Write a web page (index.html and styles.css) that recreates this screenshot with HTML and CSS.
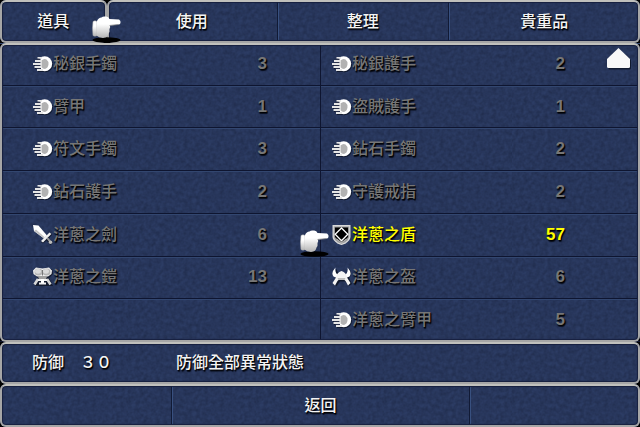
FILE: index.html
```html
<!DOCTYPE html>
<html lang="zh-Hant">
<head>
  <meta charset="UTF-8">
  <meta name="viewport" content="width=device-width, initial-scale=1">
  <title>道具</title>
  <link rel="stylesheet" href="styles.css">
</head>
<body>
  <svg class="sprites" aria-hidden="true">
    <defs>
      <linearGradient id="hand-shade" x1="0" y1="0" x2="0" y2="1">
        <stop offset="0.35" stop-color="#ffffff"/>
        <stop offset="1" stop-color="#b4b4b4"/>
      </linearGradient>
    </defs>
    <symbol id="cursor" viewBox="0 0 30 28">
      <ellipse cx="15.5" cy="25" rx="14" ry="2.8" fill="#000"/>
      <path d="M2 6.500 Q4 5 6 6.500 V20.500 Q4 22 2 20.500 Q1 13 2 6.500Z" fill="url(#hand-shade)" stroke="#aaa" stroke-width=".5"/>
      <path d="M6 6 Q7.500 2.500 10.500 2.500 Q12 1 14.500 1.500 Q17.500 1 18.500 4 L28 4.500 Q30 5.500 29.500 8 Q29 9.500 27.500 9.500 L19 10.500 Q19.500 12.500 18.500 14 Q19 17 17.500 18.500 Q17 22.500 12 23 Q7.500 22.500 5.500 20.500Z" fill="url(#hand-shade)"/>
      <path d="M18.500 10.500 L27.500 9.500" stroke="#888" stroke-width=".8" fill="none"/>
    </symbol>
    <symbol id="glove" viewBox="0 0 20 20">
      <circle cx="12.500" cy="10.800" r="7.500" fill="#111a30"/>
      <path d="M2 8 H9 M1 11 H9 M2 14 H9 M5 17 H11" stroke="#111a30" stroke-width="2" fill="none"/>
      <circle cx="11.700" cy="9.800" r="7.500" fill="#fff"/>
      <path d="M8.500 6.500 Q11 4 13.500 5.500 Q16 7.500 15.500 10.500 Q15 14 12 15 Q9.500 15 8.500 13Z" fill="#b2b2b2"/>
      <path d="M4.500 3.800 H9 M2 7 H8.500 M0 10 H8.500 M1.500 13 H8.500 M4 16 H10" stroke="#e6e6e6" stroke-width="1.800" fill="none"/>
      <path d="M3.500 5.400 H7.500 M2 8.500 H7.500 M2 11.500 H7.500 M3.500 14.500 H8" stroke="#28304a" stroke-width="1.200" fill="none"/>
    </symbol>
    <symbol id="sword" viewBox="0 0 20 20">
      <path d="M1 1.500 L6 2 L14 11 L18 8 L19 10 L15.500 13.500 L20 17.500 L17.500 20 L13.500 15.500 L10 18.500 L8 17 L11 13.500 L2 6Z" fill="#10182c"/>
      <path d="M0 0 L5.500 .500 L14 10.500 L11 13.500 L1 6Z" fill="#fff"/>
      <path d="M1 6 L11 13.500 L12 12.500 L3 4.500Z" fill="#c4c4c4"/>
      <path d="M16.500 7.500 L18.300 9 L10 17.600 L8 16Z" fill="#f0f0f0"/>
      <path d="M13.500 13.500 L15 12.500 L18 16 L16.500 17.500Z" fill="#999"/>
      <circle cx="17.500" cy="17.200" r="1.800" fill="#bbb"/>
    </symbol>
    <symbol id="armor" viewBox="0 0 20 20">
      <path d="M2 2 H19 L20 7 L16 11 L20 19 H2 L5 11 L1 7Z" fill="#141b2e"/>
      <path d="M3 .500 L9.500 1.500 L16 .500 L19 3.500 L18.500 7 L15 9.500 H4 L.500 7 L0 3.500Z" fill="#f0f0f0"/>
      <ellipse cx="5.500" cy="5" rx="4" ry="3.600" fill="#b4b4b4"/>
      <ellipse cx="13.500" cy="5" rx="4" ry="3.600" fill="#b4b4b4"/>
      <ellipse cx="5" cy="4.300" rx="3" ry="2.400" fill="#dadada"/>
      <ellipse cx="13" cy="4.300" rx="3" ry="2.400" fill="#dadada"/>
      <path d="M9.500 3 V8.500" stroke="#777" stroke-width="1"/>
      <path d="M5 9 H14 L13 13 H6Z" fill="#a0a0a0"/>
      <path d="M5 12 L1.500 17.500 M14 12 L17.500 17.500" stroke="#d8d8d8" stroke-width="2.600"/>
      <path d="M5 13 H14 M6 16.500 H13" stroke="#f2f2f2" stroke-width="1.800"/>
      <path d="M8 12 h3 v4 h-3z" fill="#fff"/>
    </symbol>
    <symbol id="shield" viewBox="0 0 20 20">
      <path d="M1.200 .7 H17.800 V12 Q17.500 15 13.500 17.800 L9.500 19.300 L5.500 17.800 Q1.500 15 1.200 12Z" fill="#999" stroke="#d8d8d8" stroke-width="1.400"/>
      <path d="M3 2.500 H16 V12 Q14.500 14.500 9.500 17 Q4.500 14.500 3 12Z" fill="#000"/>
      <path d="M9.500 3 L15.800 9.300 L9.500 15.800 L3.200 9.300Z" fill="#000" stroke="#fff" stroke-width="1.300"/>
      <path d="M4.500 14 L9.500 18 L14.500 14" stroke="#aaa" stroke-width="1.200" fill="none"/>
    </symbol>
    <symbol id="helmet" viewBox="0 0 20 20">
      <path d="M4.500 2 Q0 7 4 11 L2 17 L4.500 19 L8 14.500 H13 L17 19 L20 17 L17 11 Q21 7 17.500 2 L15 8 L10.500 5 L7 8Z" fill="#10182c"/>
      <path d="M3.500 .500 Q-1.500 6 1.500 9.500 L5 11 L6.500 8.500 Q2.500 6 3.500 .500Z M15.500 .500 Q20.500 6 17.500 9.500 L14 11 L12.500 8.500 Q16.500 6 15.500 .500Z" fill="#fff"/>
      <path d="M9.500 4 Q14.500 5.500 15 10.500 L18.500 16 L16 18.500 L13.500 14 L12.500 13 H6.500 L5.500 14 L3 18.500 L.500 16 L4 10.500 Q4.500 5.500 9.500 4Z" fill="#f4f4f4"/>
      <path d="M5.500 11 H13.500 L12.500 13 H6.500Z" fill="#bdbdbd"/>
    </symbol>
  </svg>

  <div class="screen">
    <nav class="tabs">
      <div class="panel tabs-title">
        <button class="tab">道具</button>
        <svg class="cursor" aria-hidden="true"><use href="#cursor"/></svg>
      </div>
      <div class="panel tabs-menu">
        <button class="tab">使用</button>
        <button class="tab">整理</button>
        <button class="tab tab-wide">貴重品</button>
      </div>
    </nav>

    <main class="panel inventory">
      <ul class="items">
        <li><button class="item"><svg class="icon"><use href="#glove"/></svg><span class="name">秘銀手鐲</span><span class="count">3</span></button></li>
        <li><button class="item"><svg class="icon"><use href="#glove"/></svg><span class="name">秘銀護手</span><span class="count">2</span></button></li>
        <li><button class="item"><svg class="icon"><use href="#glove"/></svg><span class="name">臂甲</span><span class="count">1</span></button></li>
        <li><button class="item"><svg class="icon"><use href="#glove"/></svg><span class="name">盜賊護手</span><span class="count">1</span></button></li>
        <li><button class="item"><svg class="icon"><use href="#glove"/></svg><span class="name">符文手鐲</span><span class="count">3</span></button></li>
        <li><button class="item"><svg class="icon"><use href="#glove"/></svg><span class="name">鉆石手鐲</span><span class="count">2</span></button></li>
        <li><button class="item"><svg class="icon"><use href="#glove"/></svg><span class="name">鉆石護手</span><span class="count">2</span></button></li>
        <li><button class="item"><svg class="icon"><use href="#glove"/></svg><span class="name">守護戒指</span><span class="count">2</span></button></li>
        <li><button class="item"><svg class="icon"><use href="#sword"/></svg><span class="name">洋蔥之劍</span><span class="count">6</span></button></li>
        <li>
          <button class="item selected"><svg class="icon"><use href="#shield"/></svg><span class="name">洋蔥之盾</span><span class="count">57</span></button>
          <svg class="cursor" aria-hidden="true"><use href="#cursor"/></svg>
        </li>
        <li><button class="item"><svg class="icon"><use href="#armor"/></svg><span class="name">洋蔥之鎧</span><span class="count">13</span></button></li>
        <li><button class="item"><svg class="icon"><use href="#helmet"/></svg><span class="name">洋蔥之盔</span><span class="count">6</span></button></li>
        <li></li>
        <li><button class="item"><svg class="icon"><use href="#glove"/></svg><span class="name">洋蔥之臂甲</span><span class="count">5</span></button></li>
      </ul>
      <button class="scroll-up" aria-label="上">
        <svg viewBox="0 0 24 22"><path d="M12.500 1.500 L24 12 V20 Q24 21.500 22 21.500 H3 Q1.500 21.500 1.500 20 V12Z" fill="#111a30"/><path d="M11.500 0 L23 11 V18.500 Q23 20 21.500 20 H1.500 Q0 20 0 18.500 V11Z" fill="#f8f8f8"/></svg>
      </button>
    </main>

    <section class="panel info">
      <span>防御　３０</span>
      <span>防御全部異常狀態</span>
    </section>

    <footer class="panel actions">
      <div class="blank"></div>
      <button class="back">返回</button>
      <div class="blank"></div>
    </footer>
  </div>
</body>
</html>
```
FILE: styles.css
```css
* {
  box-sizing: border-box;
}

body {
  margin: 0;
  background: #000;
  color: #f4f4f4;
  font-family: "Liberation Sans", "Noto Sans CJK TC", sans-serif;
  font-size: 16px;
  font-weight: 500;
  line-height: 24px;
  text-shadow: 1px 1px 1px #000, 1px 2px 1px #0a0f20;
}

button {
  background: none;
  border: none;
  padding: 0;
  margin: 0;
  color: inherit;
  font: inherit;
  text-shadow: inherit;
  cursor: pointer;
}

.sprites {
  position: absolute;
  width: 0;
  height: 0;
}

.screen {
  display: grid;
  grid-template-rows: 43px 1fr 42px 43px;
  min-height: 100vh;
}

/* blue window with the mottled texture */
.panel {
  position: relative;
  border-radius: 6px;
  background-color: #2c3c64;
  background-image: url("data:image/svg+xml,%3Csvg xmlns='http://www.w3.org/2000/svg' width='128' height='128'%3E%3Cfilter id='n' color-interpolation-filters='sRGB'%3E%3CfeTurbulence type='fractalNoise' baseFrequency='.25' numOctaves='2' stitchTiles='stitch'/%3E%3CfeColorMatrix values='0 0 0 0 .1 0 0 0 0 .14 0 0 0 0 .25 .9 0 0 0 -.2'/%3E%3C/filter%3E%3Crect width='128' height='128' filter='url(%23n)'/%3E%3C/svg%3E");
}

/* frame is drawn over the cells so they can fill the whole window */
.panel::after {
  content: "";
  position: absolute;
  inset: 0;
  border: 2px solid #a6a6a6;
  border-top-color: #c0c0bc;
  border-radius: 6px;
  box-shadow: inset 0 0 1px 1px #17203f;
  pointer-events: none;
}

.tabs {
  display: grid;
  grid-template-columns: 1fr 5fr;
}

.tabs-title,
.tabs-menu {
  display: flex;
}

.tab {
  flex: 8;
}

.tab-wide {
  flex: 9;
}

.tab + .tab,
.actions > * + * {
  border-left: 1px solid #111a35;
  box-shadow: inset 1px 0 #38507f;
}

.cursor {
  position: absolute;
  z-index: 2;
  width: 30px;
  height: 28px;
}

.tabs-title .cursor {
  right: -14px;
  top: 15px;
}

.items {
  display: grid;
  grid-template-columns: 1fr 1fr;
  grid-auto-rows: 1fr;
  height: 100%;
  margin: 0;
  padding: 0;
  list-style: none;
}

.items li {
  position: relative;
  display: flex;
  padding: 0 53px 0 33px;
  border-bottom: 1px solid #0e1530;
  box-shadow: inset 0 1px #32466f;
}

.items li:nth-child(even) {
  padding: 0 75px 0 11px;
  border-left: 1px solid #0e1530;
}

.items .cursor {
  left: -22px;
  top: 15px;
}

.item {
  flex: 1;
  display: flex;
  align-items: center;
  color: #767676;
  text-align: left;
}

.item.selected {
  color: #ffff00;
}

.icon {
  width: 20px;
  height: 20px;
}

.name {
  flex: 1;
}

.count {
  font-size: 17px;
  font-weight: bold;
}

.scroll-up {
  position: absolute;
  top: 5px;
  right: 9px;
  z-index: 1;
  width: 24px;
  height: 22px;
}

.scroll-up svg {
  display: block;
}

.info {
  display: flex;
  align-items: center;
  gap: 64px;
  padding: 0 32px;
}

.actions {
  display: grid;
  grid-template-columns: 4fr 7fr 4fr;
}
```
